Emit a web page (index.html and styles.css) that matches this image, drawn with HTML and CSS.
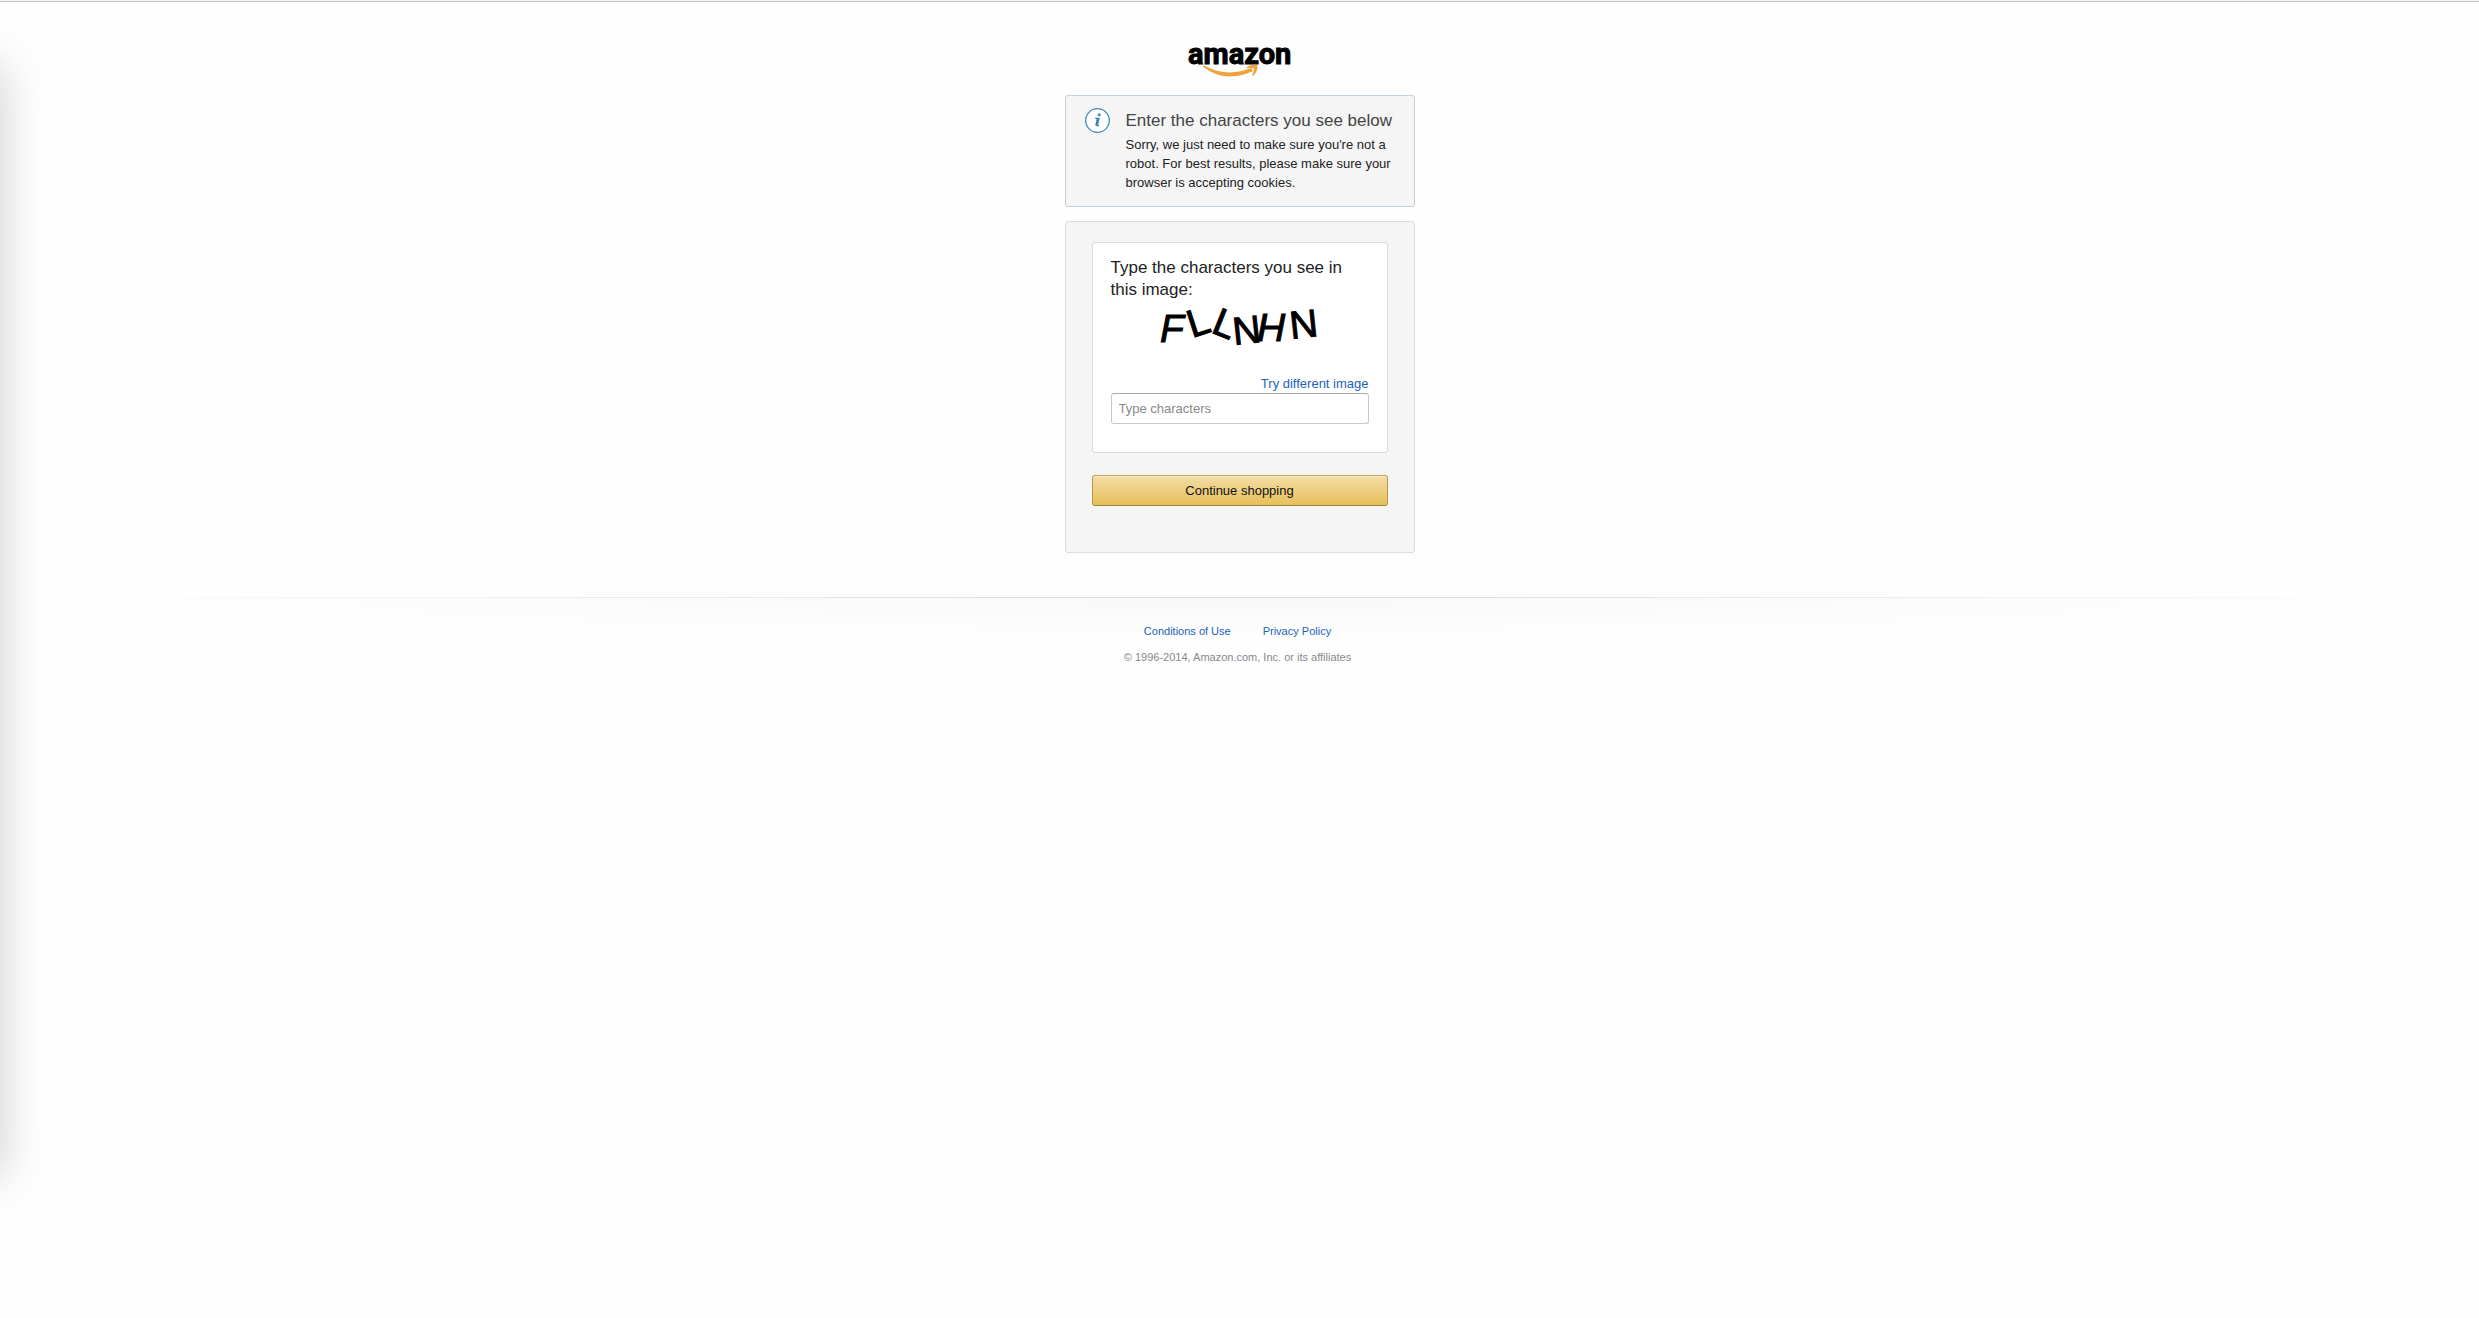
FILE: index.html
```html
<!DOCTYPE html>
<html lang="en">
<head>
<meta charset="utf-8">
<title>Robot Check</title>
<meta name="viewport" content="width=device-width, initial-scale=1">
<link rel="stylesheet" href="styles.css">
</head>
<body>
<div class="edge-shadow" aria-hidden="true"></div>
<main class="container">
  <svg class="logo" width="104" height="36" viewBox="0 0 104 36" role="img" aria-label="amazon">
    <text class="logo-word" x="0" y="20">amazon</text>
    <path d="M15 22.500C31 35.500 50 34.500 65 27L63.500 24C48 30 32 30.500 16 21.600C15 21.200 14.500 22 15 22.500Z" fill="#f0a13c"/>
    <path d="M59 23C62 20.800 67.500 20.200 69.300 21.600C70.500 24 68 29.500 65.200 31.700C64.500 32 64 31.400 64.300 30.800C65.500 28 66.500 26 65.800 24.700C65 23.700 61 24 59.500 24.200C58.600 24.300 58.400 23.500 59 23Z" fill="#f0a13c"/>
  </svg>

  <section class="notice">
    <svg class="notice-icon" width="25" height="25" viewBox="0 0 25 25" aria-hidden="true">
      <circle cx="12.500" cy="12.500" r="11.800" fill="#fff" stroke="#4289b3" stroke-width="1.300"/>
      <circle cx="14.200" cy="6.700" r="1.500" fill="#3d87b2"/>
      <path d="M10.200 10.300H14.100L12.100 17.600H14" fill="none" stroke="#3d87b2" stroke-width="1.200"/>
      <path d="M13 10.300L11.500 17.700" fill="none" stroke="#3d87b2" stroke-width="2.600"/>
    </svg>
    <div>
      <h1 class="notice-title">Enter the characters you see below</h1>
      <p class="notice-text">Sorry, we just need to make sure you're not a robot. For best results, please make sure your browser is accepting cookies.</p>
    </div>
  </section>

  <form class="panel" action="#">
    <div class="card">
      <label class="question" for="characters">Type the characters you see in this image:</label>
      <svg class="captcha" width="200" height="70" viewBox="0 0 200 70">
        <text class="slant" x="20" y="41">F</text>
        <text transform="translate(52 37) rotate(-18)">L</text>
        <text transform="translate(70 31) rotate(22)">L</text>
        <text transform="translate(94 44) rotate(-6)">N</text>
        <text class="slant" x="117" y="40">H</text>
        <text transform="translate(151 38) rotate(-6)">N</text>
      </svg>
      <a class="retry" href="#">Try different image</a>
      <input class="field" id="characters" type="text" placeholder="Type characters" autocomplete="off">
    </div>
    <button class="submit" type="submit">Continue shopping</button>
  </form>
</main>

<footer class="footer">
  <nav class="footer-links">
    <a href="#">Conditions of Use</a>
    <a href="#">Privacy Policy</a>
  </nav>
  <p class="copyright">© 1996-2014, Amazon.com, Inc. or its affiliates</p>
</footer>
</body>
</html>
```
FILE: styles.css
```css
* {
  box-sizing: border-box;
}

html {
  background: #fefefe;
}

body {
  position: relative;
  min-height: 100vh;
  margin: 0;
  overflow-x: hidden;
  background: linear-gradient(#f4f4f4 1px, #c8c8c8 1px, #c8c8c8 2px, transparent 2px) no-repeat;
  color: #222;
  font: 13px/19px "Liberation Sans", Arial, sans-serif;
}

h1,
p {
  margin: 0;
}

a {
  color: #2162bc;
  text-decoration: none;
}

a:hover {
  text-decoration: underline;
}

/* Soft shadow falling in from the left window edge */
.edge-shadow {
  position: absolute;
  top: 66px;
  bottom: 142px;
  left: -100px;
  width: 100px;
  box-shadow: 0 0 48px rgba(0, 0, 0, 0.2);
  pointer-events: none;
}

.container {
  display: flex;
  flex-direction: column;
  align-items: center;
  width: 350px;
  max-width: 100%;
  margin: 0 auto;
  padding-top: 44px;
}

.logo {
  margin-bottom: 15px;
  overflow: visible;
}

.logo-word {
  fill: #000;
  stroke: #000;
  stroke-width: 1px;
  font: bold 29px Roboto, "Liberation Sans", sans-serif;
}

.notice {
  display: flex;
  gap: 16px;
  width: 100%;
  padding: 14px 18px 14px 19px;
  border: 1px solid #bdd0dc;
  border-radius: 3px;
  background: #f5f5f5;
}

.notice-icon {
  flex: none;
  margin-top: -2px;
}

.notice-title {
  margin-bottom: 3px;
  color: #444;
  font-size: 17px;
  font-weight: normal;
  line-height: 22px;
}

.panel {
  width: 100%;
  margin-top: 14px;
  padding: 20px 26px 46px;
  border: 1px solid #dcdcdc;
  border-radius: 3px;
  background: #f5f5f5;
}

.card {
  display: flex;
  flex-direction: column;
  margin-bottom: 22px;
  padding: 14px 18px 28px;
  border: 1px solid #dcdcdc;
  border-radius: 3px;
  background: #fff;
}

.question {
  font-size: 17px;
  line-height: 22px;
}

.captcha {
  align-self: center;
  margin-bottom: 3px;
  overflow: visible;
  fill: #000;
  stroke: #000;
  stroke-width: 1px;
  font: 39px "Liberation Sans", sans-serif;
}

.slant {
  font-style: italic;
}

.retry {
  align-self: flex-end;
}

.field {
  width: 100%;
  height: 31px;
  padding: 3px 7px;
  border: 1px solid #c8c8c8;
  border-top-color: #a8a8a8;
  border-radius: 3px;
  background: #fff;
  color: #333;
  font: inherit;
}

.field::placeholder {
  color: #888;
}

.submit {
  display: block;
  width: 100%;
  height: 31px;
  padding: 0;
  border: 1px solid #b8974a;
  border-top-color: #c5a555;
  border-bottom-color: #a2843c;
  border-radius: 3px;
  background: linear-gradient(#f3dda6, #e7c05a);
  box-shadow: inset 0 1px 0 #f8ebc9;
  color: #111;
  font: inherit;
  cursor: pointer;
}

.footer {
  display: flex;
  flex-direction: column;
  align-items: center;
  margin-top: 44px;
  padding: 26px 4px 26px 0;
  background:
    linear-gradient(90deg, transparent 2%, #dedede 45%, #dedede 55%, transparent 98%) top / 100% 1px no-repeat,
    radial-gradient(closest-side, rgba(0, 0, 0, 0.025), transparent) center -40px / 96% 80px no-repeat;
  font-size: 11px;
  line-height: 16px;
}

.footer-links {
  display: flex;
  gap: 32px;
  margin-bottom: 10px;
}

.copyright {
  color: #888;
}
```
